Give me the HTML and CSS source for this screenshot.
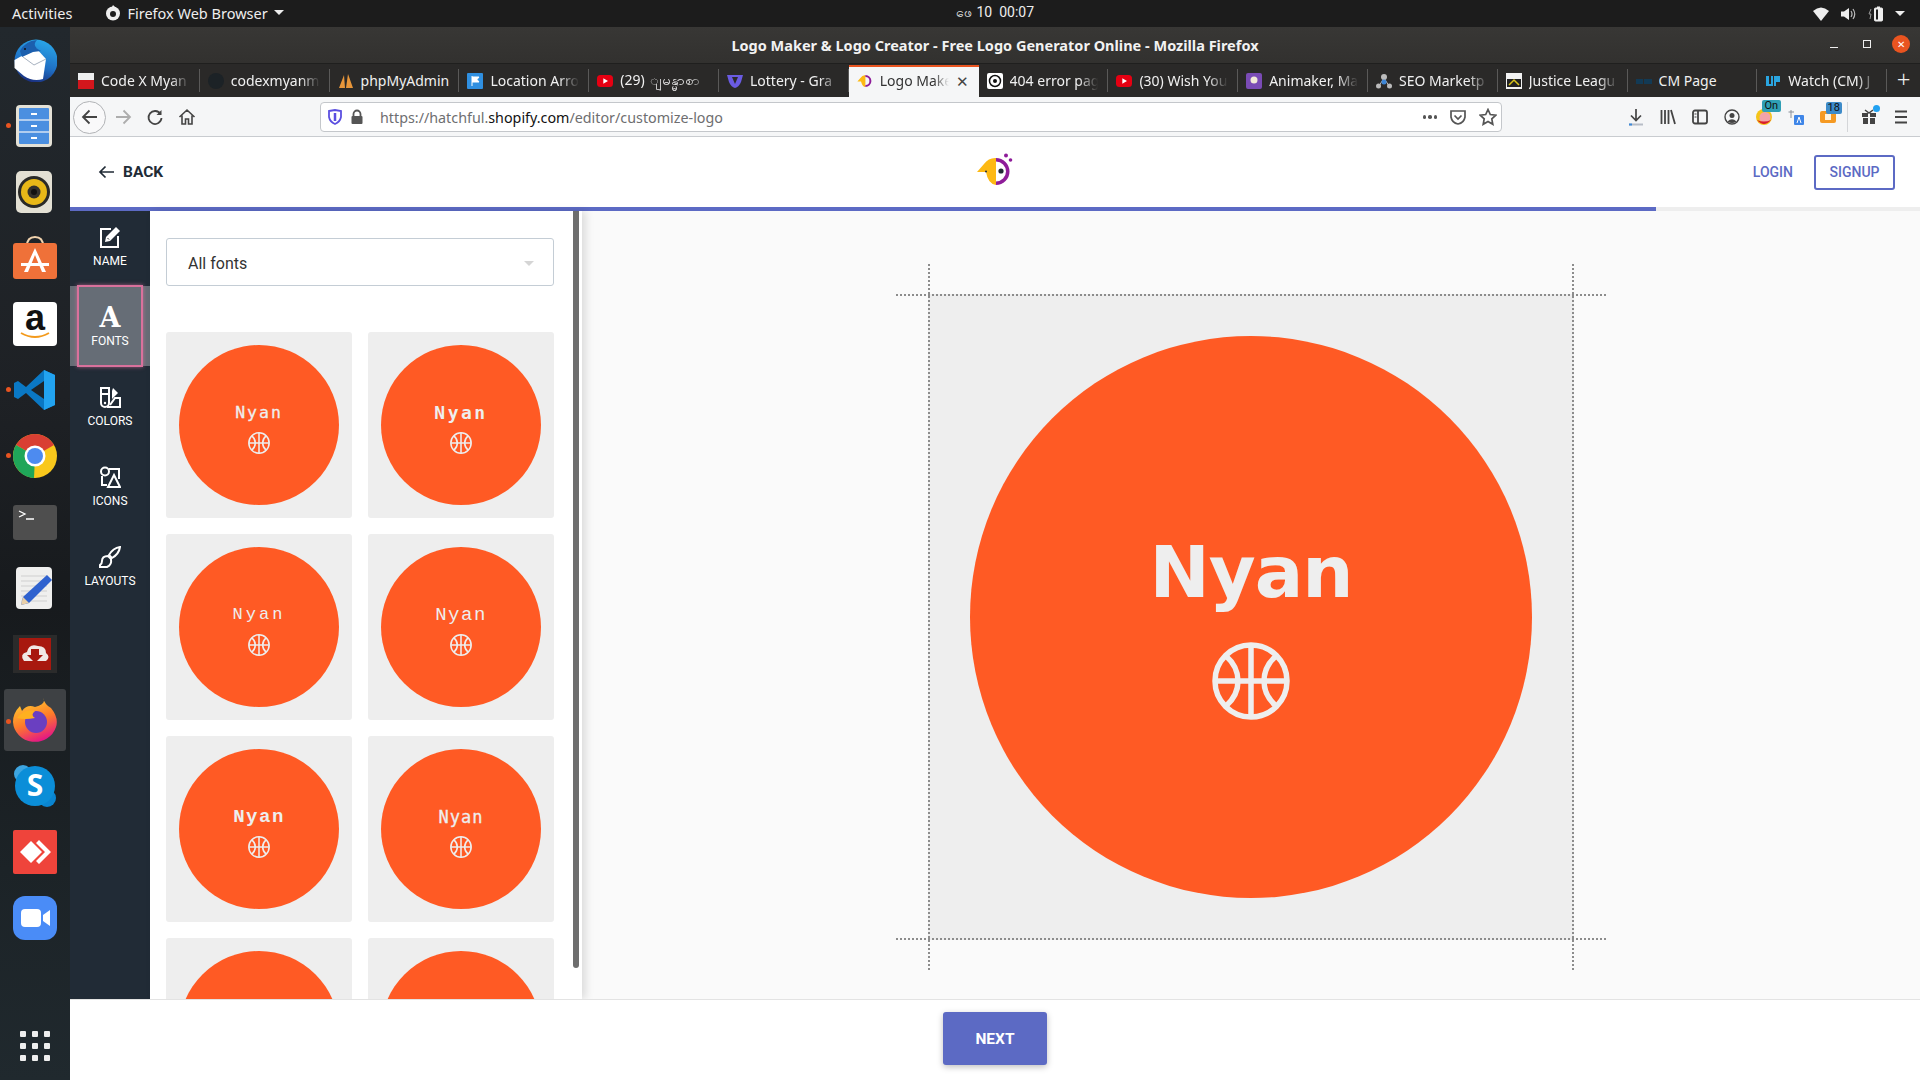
FILE: index.html
```html
<!DOCTYPE html>
<html lang="en">
<head>
    <meta charset="UTF-8">
    <meta name="viewport" content="width=device-width, initial-scale=1.0">
    <title>Logo Maker &amp; Logo Creator</title>
    <link rel="stylesheet" href="styles.css">
</head>
<body>
    <svg class="defs" width="0" height="0">
        <symbol id="ball" viewBox="0 0 78 78">
            <g fill="none" stroke="currentColor" stroke-width="5.5">
                <circle cx="39" cy="39" r="36"/>
                <path d="M39 3V75M3 39H75M14 14C30 28 30 50 14 64M64 14C48 28 48 50 64 64"/>
            </g>
        </symbol>
        <symbol id="yt" viewBox="0 0 16 16">
            <rect x="0" y="2" width="16" height="12" rx="3.5" fill="#e60012"/>
            <path d="M6.3 5.2L11 8L6.3 10.8Z" fill="#fff"/>
        </symbol>
    </svg>

    <header class="topbar">
        <div class="topbar-left">
            <span class="activities">Activities</span>
            <svg class="app-mark" width="16" height="16" viewBox="0 0 16 16"><circle cx="8" cy="8.5" r="7" fill="#eee"/><circle cx="8" cy="9" r="3" fill="#1d1d1d"/><path d="M8 0L11 3L6 4Z" fill="#eee"/></svg>
            <span>Firefox Web Browser</span>
            <span class="caret"></span>
        </div>
        <div class="clock">ဖေ 10&nbsp; 00:07</div>
        <div class="tray">
            <svg width="16" height="14" viewBox="0 0 16 14"><path d="M0 4Q8 -3 16 4L8 14Z" fill="#eee"/></svg>
            <svg width="15" height="14" viewBox="0 0 15 14"><path d="M0 4.5H3L8 1V13L3 9.500H0Z" fill="#eee"/><path d="M10 4Q12 7 10 10M12 2Q15.500 7 12 12" fill="none" stroke="#bbb" stroke-width="1.200"/></svg>
            <svg width="16" height="16" viewBox="0 0 16 16"><path d="M3 3L1 8H3L2 13" fill="none" stroke="#999"/><rect x="6.500" y="2" width="8" height="13" rx="1" fill="#eee" stroke="#eee"/><rect x="8" y="3.500" width="2" height="10" fill="#1d1d1d"/><rect x="9" y="0.500" width="3" height="2" fill="#eee"/></svg>
            <span class="caret"></span>
        </div>
    </header>

    <div class="desktop">
        <nav class="dock">
            <div class="dock-item">
                <svg viewBox="0 0 44 44"><defs><linearGradient id="tb" x1="0.7" y1="0" x2="0.4" y2="1"><stop offset="0" stop-color="#2aa8ea"/><stop offset="0.6" stop-color="#1f6fc4"/><stop offset="1" stop-color="#1b2f7e"/></linearGradient></defs><circle cx="23" cy="23" r="21.500" fill="url(#tb)"/><path d="M1.500 22L23 10L33 21L30 41Q20 44 11 38L1.500 30Z" fill="#fff"/><path d="M10 19L21 27L33 21" fill="none" stroke="#a8b2c0" stroke-width="1"/><path d="M7 13Q12 3 24 2Q18 8 28 13L20 14L9 19Z" fill="#1b5fae"/><circle cx="12" cy="11" r="1" fill="#111"/></svg>
            </div>
            <div class="dock-item running">
                <svg viewBox="0 0 44 44"><rect x="3" y="1" width="36" height="42" rx="4" fill="#e4e1d6"/><rect x="6" y="4" width="30" height="36" rx="1" fill="#4b8fe0"/><path d="M6 16H36M6 28H36" stroke="#d4e2f4" stroke-width="1.500"/><path d="M18 10H24M18 22H24M18 34H24" stroke="#fff" stroke-width="2"/></svg>
            </div>
            <div class="dock-item">
                <svg viewBox="0 0 44 44"><rect x="3" y="1" width="36" height="42" rx="5" fill="#e3e0d4"/><circle cx="21" cy="22" r="16" fill="#2a2a28"/><circle cx="21" cy="22" r="13" fill="#e8b818"/><circle cx="21" cy="22" r="6.500" fill="#33312c"/><circle cx="21" cy="22" r="3" fill="#111"/></svg>
            </div>
            <div class="dock-item">
                <svg viewBox="0 0 44 44"><path d="M14 10Q14 1 22 1Q30 1 30 10" fill="none" stroke="#f1d3ae" stroke-width="2"/><rect x="0" y="7" width="44" height="36" rx="3" fill="#ef7139"/><path d="M22 12L11 36H15L22 19L29 36H33Z" fill="#fff"/><rect x="8" y="27" width="28" height="3" fill="#fff"/></svg>
            </div>
            <div class="dock-item">
                <svg viewBox="0 0 44 44"><rect width="44" height="44" rx="4" fill="#fff"/><text x="22" y="28" class="amazon-a">a</text><path d="M8 31Q22 39 36 31" fill="none" stroke="#f39a1c" stroke-width="2"/></svg>
            </div>
            <div class="dock-item running">
                <svg viewBox="0 0 44 44"><path d="M31 2L42 7V37L31 42L13 25L5 31L1 29V15L5 13L13 19Z" fill="#0a78c4"/><path d="M31 2L42 7V37L31 42L31 31V13Z" fill="#22a3f0"/><path d="M31 13V31L18 22Z" fill="#1d2429"/></svg>
            </div>
            <div class="dock-item running">
                <svg viewBox="0 0 44 44"><circle cx="22" cy="22" r="22" fill="#f9c81c"/><path d="M22 22L3 11A22 22 0 0 1 41 11Z" fill="#d93f33"/><path d="M22 22L3 11A22 22 0 0 0 21 44Z" fill="#1fa659"/><circle cx="22" cy="22" r="10.500" fill="#fff"/><circle cx="22" cy="22" r="8" fill="#4d8bf0"/></svg>
            </div>
            <div class="dock-item">
                <svg viewBox="0 0 44 44"><rect y="5" width="44" height="35" rx="3" fill="#4e4e4e"/><path d="M6 11L12 14L6 17" fill="none" stroke="#fff" stroke-width="1.300"/><path d="M13 19H21" stroke="#fff" stroke-width="1.500"/></svg>
            </div>
            <div class="dock-item">
                <svg viewBox="0 0 44 44"><rect x="3" y="1" width="36" height="42" rx="4" fill="#efefee"/><path d="M8 10H34M8 15H34M8 20H34M8 25H34M8 30H34M8 35H34" stroke="#cfcfcf"/><path d="M34 9L39 14L16 37L8 39L10 31Z" fill="#2f62cf"/><path d="M10 31L16 37L8 39Z" fill="#e8cfa8"/></svg>
            </div>
            <div class="dock-item">
                <svg viewBox="0 0 44 44"><rect y="3" width="44" height="38" fill="#2b2b2b"/><rect x="6" y="6" width="32" height="32" fill="#a8180f"/><path d="M11 29Q6 22 14 20Q16 11 25 14Q33 14 33 21Q38 25 33 29Z" fill="#f1e7e5"/><path d="M18 17H26V23H30L22 31L14 23H18Z" fill="#a8180f"/></svg>
            </div>
            <div class="dock-item running active">
                <svg viewBox="0 0 44 44"><defs><linearGradient id="fx" x1="0.2" y1="0" x2="0.6" y2="1"><stop offset="0" stop-color="#ffd32e"/><stop offset="0.55" stop-color="#ff7a2a"/><stop offset="1" stop-color="#e31587"/></linearGradient></defs><path d="M30 0Q32 7 38 10Q46 20 43 29A22 21 0 0 1 0 24Q0 15 7 8L9 13Q14 6 22 9Q34 6 30 0Z" fill="url(#fx)"/><circle cx="23" cy="24" r="11" fill="#6a3fc1"/><path d="M4 20Q12 10 22 13Q17 17 22 20Q12 22 4 20Z" fill="#ffb01f"/></svg>
            </div>
            <div class="dock-item">
                <svg viewBox="0 0 44 44"><circle cx="10" cy="10" r="9" fill="#3ea5e0"/><circle cx="34" cy="34" r="9" fill="#0a85d1"/><circle cx="22" cy="22" r="20" fill="#0b8ed8"/><text x="22" y="32" class="skype-s">S</text></svg>
            </div>
            <div class="dock-item">
                <svg viewBox="0 0 44 44"><rect width="44" height="44" rx="2" fill="#ef443b"/><path d="M7 22L18 11L29 22L18 33Z" fill="#fff"/><path d="M26 10L38 22L26 34L23 31L32 22L23 13Z" fill="#fff"/></svg>
            </div>
            <div class="dock-item">
                <svg viewBox="0 0 44 44"><rect width="44" height="44" rx="12" fill="#4a8cf7"/><rect x="8" y="13" width="20" height="18" rx="4" fill="#fff"/><path d="M30 19L37 14V30L30 25Z" fill="#fff"/></svg>
            </div>
            <div class="apps-grid">
                <i></i><i></i><i></i><i></i><i></i><i></i><i></i><i></i><i></i>
            </div>
        </nav>

        <main class="window">
            <div class="titlebar">
                <span>Logo Maker &amp; Logo Creator - Free Logo Generator Online - Mozilla Firefox</span>
                <div class="win-controls">
                    <span class="win-min"></span>
                    <span class="win-max"></span>
                    <span class="win-close">✕</span>
                </div>
            </div>

            <div class="tabs">
                <div class="tab"><svg width="16" height="16" viewBox="0 0 16 16"><rect width="16" height="16" fill="#eee"/><rect y="7" width="16" height="9" fill="#d4161c"/></svg><span class="tab-label">Code X Myan</span></div>
                <div class="tab"><svg width="16" height="16" viewBox="0 0 16 16"><circle cx="8" cy="8" r="8" fill="#1c2226"/></svg><span class="tab-label">codexmyanm</span></div>
                <div class="tab"><svg width="16" height="16" viewBox="0 0 16 16"><path d="M1 15L6 2L7 15ZM8 15L10 1L15 15Z" fill="#e8963a"/></svg><span class="tab-label tab-plain">phpMyAdmin</span></div>
                <div class="tab"><svg width="16" height="16" viewBox="0 0 16 16"><rect width="16" height="16" rx="1" fill="#2f8fe0"/><path d="M5 3V13M5 4H12L10 6.500L12 9H5" fill="#fff" stroke="#fff"/></svg><span class="tab-label">Location Arro</span></div>
                <div class="tab"><svg width="16" height="16"><use href="#yt"/></svg><span class="tab-label">(29) ျမန္မာစာ</span></div>
                <div class="tab"><svg width="16" height="16" viewBox="0 0 16 16"><path d="M0 2H16L14 9Q12 14 8 15Q4 14 2 9Z" fill="#6a5be2"/><path d="M5 4H11L8 11Z" fill="#2b2a29"/></svg><span class="tab-label">Lottery - Gra</span></div>
                <div class="tab tab-active"><svg width="16" height="14" viewBox="0 0 40 34"><path d="M21 2A16 16 0 0 0 8 10L1 18H10Q14 32 21 32Z" fill="#fdb913"/><path d="M21 2A15 15 0 0 1 21 32V27A10 10 0 0 0 21 7Z" fill="#8e1c99"/></svg><span class="tab-label">Logo Make</span><span class="tab-close">✕</span></div>
                <div class="tab"><svg width="16" height="16" viewBox="0 0 16 16"><rect width="16" height="16" rx="2" fill="#fff"/><circle cx="8" cy="8" r="5.500" fill="none" stroke="#111" stroke-width="1.500"/><circle cx="8" cy="8" r="2" fill="#111"/></svg><span class="tab-label">404 error pag</span></div>
                <div class="tab"><svg width="16" height="16"><use href="#yt"/></svg><span class="tab-label">(30) Wish You</span></div>
                <div class="tab"><svg width="16" height="16" viewBox="0 0 16 16"><rect width="16" height="16" rx="2" fill="#7a4bb5"/><circle cx="8" cy="7" r="3.500" fill="#f2e9d8"/></svg><span class="tab-label">Animaker, Ma</span></div>
                <div class="tab"><svg width="16" height="16" viewBox="0 0 16 16"><path d="M8 5L3 13M8 5L13 13" stroke="#bbb"/><circle cx="8" cy="4" r="3" fill="#bbb"/><circle cx="2.500" cy="13" r="2.500" fill="#bbb"/><circle cx="13.500" cy="13" r="2.500" fill="#bbb"/><circle cx="8" cy="9" r="2.500" fill="#3e86d6"/></svg><span class="tab-label">SEO Marketp</span></div>
                <div class="tab"><svg width="16" height="16" viewBox="0 0 16 16"><rect width="16" height="16" fill="#f2f2f2"/><rect x="1" y="6" width="14" height="8" fill="#222"/><path d="M3 12L8 7L13 12" fill="none" stroke="#d8c21a" stroke-width="1.500"/></svg><span class="tab-label">Justice Leagu</span></div>
                <div class="tab"><svg width="16" height="16" viewBox="0 0 16 16"><rect y="6" width="7" height="5" fill="#123a55"/><rect x="8" y="6" width="8" height="5" fill="#123a55"/></svg><span class="tab-label tab-plain">CM Page</span></div>
                <div class="tab"><svg width="16" height="16" viewBox="0 0 16 16"><path d="M1 3H4V11H6V3H8V13H1ZM9 3H15V9H11V13H9Z" fill="#2aa5e0"/></svg><span class="tab-label">Watch (CM) J</span></div>
                <div class="new-tab">+</div>
            </div>

            <div class="toolbar">
                <div class="nav-buttons">
                    <button class="back-btn"><svg width="18" height="18" viewBox="0 0 18 18"><path d="M16 9H2M8.500 2.500L2 9L8.500 15.500" fill="none" stroke="#444" stroke-width="1.800"/></svg></button>
                    <svg width="18" height="18" viewBox="0 0 18 18"><path d="M2 9H16M9.500 2.500L16 9L9.500 15.500" fill="none" stroke="#adadad" stroke-width="1.800"/></svg>
                    <svg width="18" height="18" viewBox="0 0 18 18"><path d="M14.500 6A6.500 6.500 0 1 0 15.500 10" fill="none" stroke="#444" stroke-width="1.800"/><path d="M15.500 2V7H10.500Z" fill="#444"/></svg>
                    <svg width="18" height="18" viewBox="0 0 18 18"><path d="M1.500 9L9 2L16.500 9M4 7.500V16H7.500V11H10.500V16H14V7.500" fill="none" stroke="#444" stroke-width="1.600"/></svg>
                </div>
                <div class="urlbar">
                    <svg class="shield" width="14" height="16" viewBox="0 0 14 16"><path d="M1 2L7 1L13 2V8Q12 13 7 15Q2 13 1 8Z" fill="none" stroke="#5b4fe0" stroke-width="1.800"/><path d="M7 4V12" stroke="#5b4fe0" stroke-width="2.500"/></svg>
                    <svg width="14" height="16" viewBox="0 0 14 16"><path d="M3.500 7V5A3.500 3.500 0 0 1 10.500 5V7" fill="none" stroke="#555" stroke-width="1.800"/><rect x="1.500" y="7" width="11" height="8" rx="1" fill="#555"/></svg>
                    <span class="url">https://hatchful.<b>shopify.com</b>/editor/customize-logo</span>
                    <div class="url-actions">
                        <span class="dots"><i></i><i></i><i></i></span>
                        <svg width="18" height="17" viewBox="0 0 18 17"><path d="M2 2H16V8Q15 14 9 15Q3 14 2 8Z" fill="none" stroke="#555" stroke-width="1.700"/><path d="M5.500 6.500L9 10L12.500 6.500" fill="none" stroke="#555" stroke-width="1.700"/></svg>
                        <svg width="18" height="18" viewBox="0 0 18 18"><path d="M9 1.500L11.300 6.500L16.800 7.200L12.800 10.900L13.800 16.300L9 13.600L4.200 16.300L5.200 10.900L1.200 7.200L6.700 6.500Z" fill="none" stroke="#555" stroke-width="1.700"/></svg>
                    </div>
                </div>
                <div class="tool-icons">
                    <svg width="16" height="18" viewBox="0 0 16 18"><path d="M8 1V12M3 7.500L8 12.500L13 7.500" fill="none" stroke="#444" stroke-width="1.700"/><path d="M1 16.500H15" stroke="#b7bdc6" stroke-width="2"/><path d="M1 16.500H4" stroke="#3f8ad8" stroke-width="2"/></svg>
                    <svg width="16" height="16" viewBox="0 0 16 16"><path d="M1.500 1V15M5 1V15M8.500 1V15M11 1L15 15" fill="none" stroke="#444" stroke-width="1.800"/></svg>
                    <svg width="16" height="16" viewBox="0 0 16 16"><rect x="1" y="1.500" width="14" height="13" rx="2" fill="none" stroke="#444" stroke-width="1.800"/><path d="M6 1.500V14.500" stroke="#444" stroke-width="1.800"/><path d="M2.500 5H4.500M2.500 8H4.500" stroke="#444"/></svg>
                    <svg width="16" height="16" viewBox="0 0 16 16"><circle cx="8" cy="8" r="7" fill="none" stroke="#444" stroke-width="1.400"/><circle cx="8" cy="6.500" r="2.500" fill="#444"/><path d="M3.500 12.500Q8 8 12.500 12.500Q8 15.500 3.500 12.500Z" fill="#444"/></svg>
                    <span class="ext"><svg width="16" height="18" viewBox="0 0 16 18"><circle cx="8" cy="9" r="8" fill="#f5c518"/><circle cx="9" cy="9.500" r="5.500" fill="#f4a3a8"/><path d="M1 12Q8 20 15 12Q8 15 1 12Z" fill="#d81e2c"/></svg><span class="ext-badge badge-on">On</span></span>
                    <svg width="16" height="16" viewBox="0 0 16 16"><rect x="6" y="6" width="10" height="10" rx="1" fill="#3f86e8"/><path d="M3 1V9M0.500 3H6" stroke="#8a9099"/><path d="M11 8L9 14M11 8L13 14" stroke="#fff"/></svg>
                    <span class="ext"><svg width="16" height="14" viewBox="0 0 16 14"><rect y="1" width="16" height="12" rx="2" fill="#f59a23"/><rect x="5" y="4" width="6" height="6" fill="#fff3de"/></svg><span class="ext-badge badge-num">18</span></span>
                    <span class="tool-sep"></span>
                    <span class="gift"><svg width="16" height="16" viewBox="0 0 16 16"><path d="M1 4H7V8H1ZM9 4H15V8H9ZM2 9H7V15H2ZM9 9H14V15H9Z" fill="#444"/><path d="M4 1L8 4L12 1" fill="none" stroke="#444" stroke-width="1.500"/></svg><i></i></span>
                    <svg width="16" height="16" viewBox="0 0 16 16"><path d="M2 2.500H14M2 8H14M2 13.500H14" stroke="#444" stroke-width="1.800"/></svg>
                </div>
            </div>

            <div class="page-header">
                <a class="back-link"><svg width="16" height="14" viewBox="0 0 16 14"><path d="M16 7H2M7.500 1.500L2 7L7.500 12.500" fill="none" stroke="#212b36" stroke-width="1.700"/></svg>BACK</a>
                <svg class="logo" width="38" height="33" viewBox="0 0 38 33"><path d="M19 5A14 14 0 0 0 7 11L0 19H9Q11 31 19 32Z" fill="#fdb913"/><path d="M19 5A13.500 13.500 0 0 1 19 32V28.500A10 10 0 0 0 19 8.500Z" fill="#8e1c99"/><circle cx="24" cy="18" r="2.600" fill="#212b36"/><circle cx="9" cy="18.500" r="1" fill="#212b36"/><circle cx="29" cy="2.500" r="2" fill="#8e1c99"/><circle cx="33.500" cy="7" r="1.800" fill="#8e1c99"/></svg>
                <div class="auth">
                    <a class="login">LOGIN</a>
                    <a class="signup">SIGNUP</a>
                </div>
            </div>
            <div class="progress"><div class="progress-fill"></div></div>

            <div class="editor">
                <aside class="sidebar">
                    <div class="side-item">
                        <svg width="22" height="22" viewBox="0 0 22 22"><path d="M12 3H2V21H19V10" fill="none" stroke="#fff" stroke-width="2"/><path d="M17 1L21 5L11 15L6 16L7 11Z" fill="#fff"/><path d="M8.500 12L10 13.500" stroke="#212b36"/></svg>
                        NAME
                    </div>
                    <div class="side-item side-active">
                        <span class="font-glyph">A</span>
                        FONTS
                    </div>
                    <div class="side-item">
                        <svg width="22" height="22" viewBox="0 0 22 22"><path d="M2 2H10V17A4 4 0 0 1 2 17Z" fill="none" stroke="#fff" stroke-width="2"/><path d="M2 8H10" stroke="#fff" stroke-width="2"/><path d="M14 2L19 7L13 13V5Z" fill="#fff"/><path d="M8 21H21V12H16L11 19" fill="none" stroke="#fff" stroke-width="2"/><circle cx="6" cy="17" r="1.200" fill="#fff"/></svg>
                        COLORS
                    </div>
                    <div class="side-item">
                        <svg width="22" height="22" viewBox="0 0 22 22"><circle cx="6" cy="5.500" r="4" fill="none" stroke="#fff" stroke-width="2"/><path d="M10 3H20V13M3 10V19H8" fill="none" stroke="#fff" stroke-width="2"/><path d="M15 9L21 21H9Z" fill="none" stroke="#fff" stroke-width="2"/></svg>
                        ICONS
                    </div>
                    <div class="side-item">
                        <svg width="22" height="22" viewBox="0 0 22 22"><path d="M21 1Q20 8 13 12L10 9Q14 2 21 1Z" fill="none" stroke="#fff" stroke-width="2"/><path d="M9 10Q3 10 3 15Q3 18 1 19V21H8Q13 19 12 13Z" fill="none" stroke="#fff" stroke-width="2"/></svg>
                        LAYOUTS
                    </div>
                </aside>

                <section class="panel">
                    <div class="select">All fonts<span class="select-caret"></span></div>
                    <div class="font-grid">
                        <div class="font-card"><div class="badge"><span class="nyan f1">Nyan</span><svg class="ball" width="22" height="22"><use href="#ball"/></svg></div></div>
                        <div class="font-card"><div class="badge"><span class="nyan f2">Nyan</span><svg class="ball" width="22" height="22"><use href="#ball"/></svg></div></div>
                        <div class="font-card"><div class="badge"><span class="nyan f3">Nyan</span><svg class="ball" width="22" height="22"><use href="#ball"/></svg></div></div>
                        <div class="font-card"><div class="badge"><span class="nyan f4">Nyan</span><svg class="ball" width="22" height="22"><use href="#ball"/></svg></div></div>
                        <div class="font-card"><div class="badge"><span class="nyan f5">Nyan</span><svg class="ball" width="22" height="22"><use href="#ball"/></svg></div></div>
                        <div class="font-card"><div class="badge"><span class="nyan f6">Nyan</span><svg class="ball" width="22" height="22"><use href="#ball"/></svg></div></div>
                        <div class="font-card"><div class="badge"></div></div>
                        <div class="font-card"><div class="badge"></div></div>
                    </div>
                    <div class="scrollbar"></div>
                </section>

                <section class="canvas">
                    <div class="artboard">
                        <span class="guide guide-h guide-top"></span>
                        <span class="guide guide-h guide-bottom"></span>
                        <span class="guide guide-v guide-left"></span>
                        <span class="guide guide-v guide-right"></span>
                        <div class="big-badge">
                            <span class="big-name">Nyan</span>
                            <svg width="78" height="78"><use href="#ball"/></svg>
                        </div>
                    </div>
                </section>
            </div>

            <footer class="page-footer">
                <button class="next">NEXT</button>
            </footer>
        </main>
    </div>
</body>
</html>
```

FILE: styles.css
```css
* {
    margin: 0;
    padding: 0;
    box-sizing: border-box;
}

html, body {
    height: 100%;
    overflow: hidden;
}

body {
    font-family: 'Noto Sans', sans-serif;
    background: #1d1d1d;
    display: flex;
    flex-direction: column;
}

.defs {
    position: absolute;
}

/* gnome top bar */
.topbar {
    height: 27px;
    background: #1c1c1c;
    color: #eee;
    font-size: 14.500px;
    display: grid;
    grid-template-columns: 956px 1fr auto;
    align-items: center;
    flex-shrink: 0;
}

.topbar-left {
    display: flex;
    align-items: center;
    padding-bottom: 2px;
}

.activities {
    margin-left: 12px;
    margin-right: 33px;
}

.app-mark {
    margin-right: 6px;
}

.caret {
    display: inline-block;
    width: 0;
    height: 0;
    border-left: 5px solid transparent;
    border-right: 5px solid transparent;
    border-top: 5px solid #eee;
    margin-left: 6px;
}

.clock {
    font-family: 'Roboto', sans-serif;
    font-size: 14px;
}

.tray {
    display: flex;
    align-items: center;
    gap: 12px;
    padding-right: 15px;
}

.tray .caret {
    margin-left: -1px;
}

.desktop {
    flex: 1;
    display: flex;
    min-height: 0;
}

/* dock */
.dock {
    width: 70px;
    flex-shrink: 0;
    background: linear-gradient(180deg, #22282d 0%, #1e2125 35%, #171a1d 55%, #1c2327 80%, #20292e 100%);
    display: flex;
    flex-direction: column;
    align-items: center;
}

.dock-item {
    width: 62px;
    height: 66px;
    display: flex;
    align-items: center;
    justify-content: center;
    position: relative;
    flex-shrink: 0;
}

.dock-item svg {
    width: 44px;
    height: 44px;
}

.dock-item.running::before {
    content: "";
    position: absolute;
    left: 2px;
    top: 30px;
    width: 5px;
    height: 5px;
    border-radius: 50%;
    background: #e95420;
}

.dock-item.active {
    height: 62px;
    margin: 2px 0;
    background: #3e4144;
    border-radius: 3px;
}

.amazon-a {
    font-family: 'Liberation Sans', sans-serif;
    font-weight: bold;
    font-size: 36px;
    text-anchor: middle;
    fill: #111;
}

.skype-s {
    font-family: 'Open Sans', sans-serif;
    font-weight: 700;
    font-size: 30px;
    text-anchor: middle;
    fill: #fff;
}

.apps-grid {
    margin-top: auto;
    margin-bottom: 19px;
    display: grid;
    grid-template-columns: repeat(3, 6px);
    gap: 6px;
}

.apps-grid i {
    width: 6px;
    height: 6px;
    background: #eee;
    border-radius: 1px;
}

/* firefox chrome */
.window {
    flex: 1;
    display: flex;
    flex-direction: column;
    min-width: 0;
    background: #fff;
}

.titlebar {
    height: 36px;
    background: linear-gradient(180deg, #383735, #32312f);
    color: #f2f2f2;
    font-size: 14.500px;
    font-weight: 700;
    display: flex;
    align-items: center;
    justify-content: center;
    position: relative;
    flex-shrink: 0;
}

.win-controls {
    position: absolute;
    right: 10px;
    top: 8px;
    display: flex;
    align-items: center;
    height: 18px;
}

.win-min {
    width: 8px;
    height: 1px;
    background: #eee;
    margin-top: 6px;
    margin-right: 25px;
}

.win-max {
    width: 8px;
    height: 8px;
    border: 1px solid #eee;
    margin-right: 21px;
}

.win-close {
    width: 18px;
    height: 18px;
    border-radius: 50%;
    background: #e95420;
    color: #fff;
    font-size: 10px;
    font-weight: 400;
    display: flex;
    align-items: center;
    justify-content: center;
}

.tabs {
    height: 34px;
    background: #2a2928;
    border-top: 1px solid #1f1f1e;
    display: flex;
    flex-shrink: 0;
    color: #f0f0f0;
    font-size: 14px;
}

.tab {
    width: 129.800px;
    display: flex;
    align-items: center;
    gap: 7px;
    padding: 0 10px 0 8px;
    position: relative;
    flex-shrink: 0;
}

.tab svg {
    flex-shrink: 0;
}

.tab::after {
    content: "";
    position: absolute;
    right: 0;
    top: 5px;
    bottom: 5px;
    width: 1px;
    background: #5a5958;
}

.tab-label {
    flex: 1;
    overflow: hidden;
    white-space: nowrap;
    -webkit-mask-image: linear-gradient(90deg, #000 78%, transparent 100%);
    mask-image: linear-gradient(90deg, #000 78%, transparent 100%);
}

.tab-plain {
    -webkit-mask-image: none;
    mask-image: none;
}

.tab-active {
    background: #f5f6f7;
    color: #333;
    border-top: 2px solid #e95420;
    margin-top: 1px;
    padding-bottom: 3px;
}

.tab-active::after {
    display: none;
}

.tab-close {
    font-size: 15px;
    color: #444;
}

.new-tab {
    flex: 1;
    text-align: center;
    font-size: 24px;
    line-height: 30px;
    font-weight: 300;
}

.toolbar {
    height: 40px;
    background: #f5f6f7;
    border-bottom: 1px solid #c9ccd0;
    display: flex;
    align-items: center;
    padding-top: 1px;
    flex-shrink: 0;
}

.nav-buttons {
    width: 250px;
    display: flex;
    align-items: center;
    gap: 14px;
    padding-left: 3px;
    flex-shrink: 0;
}

.back-btn {
    width: 33px;
    height: 33px;
    border-radius: 50%;
    border: 1px solid #b1b3b6;
    background: #f9f9fa;
    display: flex;
    align-items: center;
    justify-content: center;
    margin-right: -6px;
}

.urlbar {
    width: 1182px;
    height: 30px;
    background: #fff;
    border: 1px solid #c4c7cb;
    border-radius: 4px;
    display: flex;
    align-items: center;
    flex-shrink: 0;
}

.shield {
    margin: 0 8px 0 7px;
}

.url {
    font-size: 14.300px;
    color: #6e6e70;
    margin-left: 16px;
}

.url b {
    font-weight: 400;
    color: #111;
}

.url-actions {
    margin-left: auto;
    display: flex;
    align-items: center;
    gap: 12px;
    padding-right: 4px;
}

.dots {
    display: flex;
    gap: 2px;
}

.dots i {
    width: 3.500px;
    height: 3.500px;
    border-radius: 50%;
    background: #555;
}

.tool-icons {
    flex: 1;
    display: flex;
    align-items: center;
    justify-content: flex-end;
    gap: 16px;
    padding-right: 11px;
}

.ext, .gift {
    position: relative;
    display: flex;
}

.ext-badge {
    position: absolute;
    font-family: 'Roboto', sans-serif;
    font-size: 11px;
    line-height: 12px;
    padding: 0 2px;
    border-radius: 2px;
    color: #111;
    left: 6px;
    top: -8px;
}

.badge-on {
    background: #2f9fb5;
    padding: 0 3px;
}

.badge-num {
    background: #3d8bc9;
}

.tool-sep {
    width: 1px;
    height: 30px;
    background: #d4d6d9;
    margin: 0 -2.500px 0 -5px;
}

.gift i {
    position: absolute;
    right: -3px;
    top: -4px;
    width: 7px;
    height: 7px;
    border-radius: 50%;
    background: #21a1f1;
}

/* hatchful page */
.page-header {
    height: 70px;
    display: flex;
    align-items: center;
    justify-content: space-between;
    padding: 0 25px 0 28px;
    position: relative;
    flex-shrink: 0;
    font-family: 'Roboto', sans-serif;
}

.back-link {
    display: flex;
    align-items: center;
    gap: 9px;
    font-size: 15.500px;
    font-weight: 700;
    color: #212b36;
}

.logo {
    position: absolute;
    left: 907px;
    top: 16px;
}

.auth {
    display: flex;
    align-items: center;
    gap: 21px;
}

.login, .signup {
    font-size: 14px;
    font-weight: 500;
    color: #5c6ac4;
}

.signup {
    border: 2px solid #5c6ac4;
    border-radius: 3px;
    width: 81px;
    height: 35px;
    display: flex;
    align-items: center;
    justify-content: center;
}

.progress {
    height: 4px;
    background: #eeeeee;
    flex-shrink: 0;
}

.progress-fill {
    width: 1586px;
    height: 100%;
    background: #5c6ac4;
}

.editor {
    flex: 1;
    display: flex;
    min-height: 0;
}

.sidebar {
    width: 80px;
    background: #212b36;
    flex-shrink: 0;
    font-family: 'Roboto', sans-serif;
    font-size: 12px;
    font-weight: 400;
    color: #fff;
}

.side-item {
    height: 80px;
    display: flex;
    flex-direction: column;
    align-items: center;
    padding-top: 20px;
    gap: 6px;
    position: relative;
}

.side-item:first-child {
    height: 75px;
    padding-top: 15px;
}

.side-active {
    background: #666d76;
    padding-top: 19px;
    gap: 4px;
}

.side-active::after {
    content: "";
    position: absolute;
    top: -1px;
    bottom: -1px;
    left: 7px;
    right: 7px;
    border: 2px solid #d9719c;
    box-shadow: 0 0 4px rgba(217, 113, 156, 0.7);
}

.font-glyph {
    font-family: 'DejaVu Serif', serif;
    font-weight: 700;
    font-size: 27px;
    line-height: 25px;
}

.panel {
    width: 432px;
    flex-shrink: 0;
    padding: 27px 16px 0;
    overflow: hidden;
    position: relative;
    background: #fff;
    box-shadow: 4px 0 8px rgba(0, 0, 0, 0.12);
    z-index: 1;
}

.select {
    width: 388px;
    height: 48px;
    border: 1px solid #c4cdd5;
    border-radius: 3px;
    font-family: 'Roboto', sans-serif;
    font-size: 16px;
    color: #333;
    display: flex;
    align-items: center;
    justify-content: space-between;
    padding: 2px 19px 0 21px;
}

.select-caret {
    width: 0;
    height: 0;
    border-left: 5px solid transparent;
    border-right: 5px solid transparent;
    border-top: 5px solid #d5d5d5;
}

.font-grid {
    margin-top: 46px;
    width: 388px;
    display: grid;
    grid-template-columns: 186px 186px;
    gap: 16px;
}

.font-card {
    height: 186px;
    background: #eeeeee;
    border-radius: 3px;
    padding: 13px;
}

.badge {
    width: 160px;
    height: 160px;
    border-radius: 50%;
    background: #ff5a24;
    color: #eeeeee;
    display: flex;
    flex-direction: column;
    align-items: center;
    justify-content: center;
    padding-top: 4px;
}

.ball {
    margin-top: 7px;
}

.nyan {
    line-height: 24px;
    white-space: nowrap;
}

.f1 {
    font-family: 'DejaVu Sans Mono', monospace;
    font-size: 16.500px;
    letter-spacing: 2px;
    -webkit-text-stroke: 0.3px #eeeeee;
}

.f2 {
    font-family: 'DejaVu Sans Mono', monospace;
    font-size: 18px;
    font-weight: 700;
    letter-spacing: 2.500px;
}

.f3 {
    font-family: 'Liberation Mono', monospace;
    font-size: 17px;
    letter-spacing: 3px;
}

.f4 {
    font-family: 'Liberation Mono', monospace;
    font-size: 19px;
    letter-spacing: 1.500px;
}

.f5 {
    font-family: 'Liberation Mono', monospace;
    font-size: 19px;
    font-weight: 700;
    letter-spacing: 1.500px;
}

.f6 {
    font-family: 'DejaVu Sans Mono', monospace;
    font-size: 17px;
    letter-spacing: 1px;
    -webkit-text-stroke: 0.3px #eeeeee;
}

.scrollbar {
    position: absolute;
    left: 423px;
    top: 0;
    width: 6px;
    height: 757px;
    background: #6e6e6e;
    border-radius: 0 0 3px 3px;
}

.canvas {
    flex: 1;
    background: #fafafa;
    display: flex;
    justify-content: center;
    padding-top: 83px;
    min-width: 0;
}

.artboard {
    width: 646px;
    height: 646px;
    background: #eeeeee;
    position: relative;
    display: flex;
    align-items: center;
    justify-content: center;
}

.guide {
    position: absolute;
}

.guide-h {
    left: -32px;
    right: -32px;
    height: 2px;
    background: repeating-linear-gradient(90deg, #8c8c8c 0 2px, transparent 2px 4px);
}

.guide-top {
    top: 0;
}

.guide-bottom {
    bottom: 0;
}

.guide-v {
    top: -30px;
    bottom: -30px;
    width: 2px;
    background: repeating-linear-gradient(180deg, #8c8c8c 0 2px, transparent 2px 4px);
}

.guide-left {
    left: 0;
}

.guide-right {
    right: 0;
}

.big-badge {
    width: 562px;
    height: 562px;
    border-radius: 50%;
    background: #ff5a24;
    color: #eeeeee;
    display: flex;
    flex-direction: column;
    align-items: center;
    justify-content: center;
    padding-top: 14px;
    gap: 26px;
}

.big-name {
    font-family: 'DejaVu Sans', sans-serif;
    font-size: 72px;
    font-weight: 700;
    letter-spacing: -1px;
    line-height: 88px;
}

.page-footer {
    height: 81px;
    border-top: 1px solid #e3e3e3;
    background: #fff;
    display: flex;
    justify-content: center;
    padding-top: 12px;
    flex-shrink: 0;
    position: relative;
    z-index: 2;
}

.next {
    width: 104px;
    height: 53px;
    border: 0;
    border-radius: 3px;
    background: #5c6ac4;
    color: #fff;
    font-family: 'Roboto', sans-serif;
    font-size: 15.500px;
    font-weight: 700;
    box-shadow: 0 2px 6px rgba(0, 0, 0, 0.25);
}
```
